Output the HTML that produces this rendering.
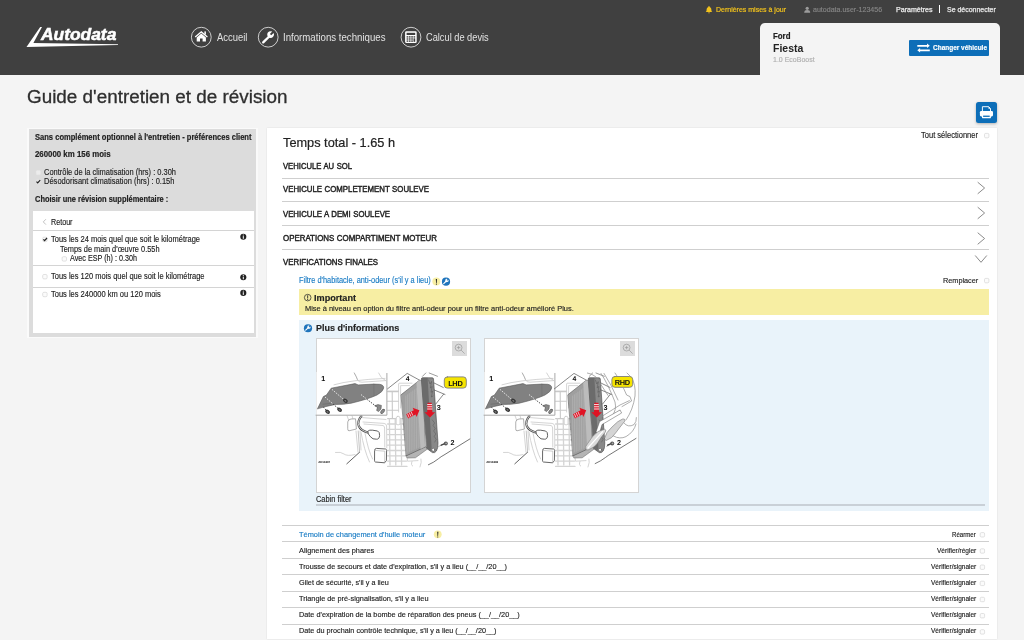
<!DOCTYPE html>
<html lang="fr">
<head>
<meta charset="utf-8">
<title>Guide d'entretien et de révision</title>
<style>
html,body{margin:0;padding:0;}
body{width:1024px;height:640px;overflow:hidden;background:#f4f4f4;font-family:"Liberation Sans",sans-serif;position:relative;}
.t{position:absolute;white-space:nowrap;line-height:1;}
.b{position:absolute;}
.hl{position:absolute;height:1px;background:#cfcfcf;}
svg{position:absolute;left:0;top:0;}
</style>
</head>
<body>
<!-- header -->
<div class="b" style="left:0;top:0;width:1024px;height:74.5px;background:#404040;"></div>
<div class="b" style="left:759.5px;top:23px;width:240.5px;height:53px;background:#f4f4f4;border-radius:5px 5px 0 0;"></div>
<div class="b" style="left:909.4px;top:40px;width:79.8px;height:16px;background:#0d6eb8;border-radius:1px;"></div>
<div class="b" style="left:939.4px;top:5.3px;width:1px;height:8px;background:#fff;"></div>
<!-- print button -->
<div class="b" style="left:976.4px;top:102px;width:20.8px;height:20.8px;background:#0d6eb8;border-radius:2.5px;box-shadow:0 1px 3px rgba(0,0,0,.28);"></div>

<!-- left panel -->
<div class="b" style="left:27px;top:127.5px;width:231.3px;height:210.5px;background:#fafafa;"></div>
<div class="b" style="left:28.7px;top:129px;width:227.8px;height:207.5px;background:#dcdcdc;"></div>
<div class="b" style="left:33px;top:210.5px;width:220.5px;height:122.5px;background:#fff;"></div>
<div class="hl" style="left:33px;top:230px;width:220.5px;background:#d4d4d4;"></div>
<div class="hl" style="left:33px;top:265px;width:220.5px;background:#d4d4d4;"></div>
<div class="hl" style="left:33px;top:287px;width:220.5px;background:#d4d4d4;"></div>

<!-- main panel -->
<div class="b" style="left:267px;top:127.5px;width:730px;height:511.3px;background:#fff;box-shadow:0 0 1.5px rgba(0,0,0,.13);"></div>
<div class="hl" style="left:282.4px;top:177.6px;width:706.9px;"></div>
<div class="hl" style="left:282.4px;top:201.2px;width:706.9px;"></div>
<div class="hl" style="left:282.4px;top:225.1px;width:706.9px;"></div>
<div class="hl" style="left:282.4px;top:248.6px;width:706.9px;"></div>
<div class="b" style="left:298.75px;top:289.25px;width:690.5px;height:25.75px;background:#f7eea3;"></div>
<div class="b" style="left:298.75px;top:319.5px;width:690.5px;height:191.5px;background:#e9f3fa;"></div>
<div class="b" style="left:315.5px;top:337.5px;width:153px;height:153px;background:#fff;border:1px solid #d4d4d4;box-sizing:content-box;"></div>
<div class="b" style="left:483.5px;top:337.5px;width:153px;height:153px;background:#fff;border:1px solid #d4d4d4;box-sizing:content-box;"></div>
<div class="b" style="left:452px;top:341px;width:15px;height:15px;background:#dcdcdc;"></div>
<div class="b" style="left:620px;top:341px;width:15px;height:15px;background:#dcdcdc;"></div>
<div class="hl" style="left:316px;top:504.4px;width:668.5px;height:1.2px;background:#c9d0d7;"></div>
<div class="hl" style="left:282.4px;top:524.9px;width:706.9px;"></div>
<div class="hl" style="left:282.4px;top:541.2px;width:706.9px;"></div>
<div class="hl" style="left:282.4px;top:557.9px;width:706.9px;"></div>
<div class="hl" style="left:282.4px;top:574.2px;width:706.9px;"></div>
<div class="hl" style="left:282.4px;top:590.9px;width:706.9px;"></div>
<div class="hl" style="left:282.4px;top:607px;width:706.9px;"></div>
<div class="hl" style="left:282.4px;top:623.7px;width:706.9px;"></div>


<div class="b" style="left:0;top:0;width:1024px;height:640px;will-change:transform;">
<svg width="1024" height="640" viewBox="0 0 1024 640">
<!-- logo swoosh -->
<path d="M40.2 27 L42 27 L33.4 43.1 L118 44.2 L118 45 L26.5 47 Z" fill="#fff"/>
<!-- nav circles -->
<g fill="none" stroke="#dcdcdc" stroke-width="0.9">
<circle cx="201.3" cy="37.2" r="9.9"/>
<circle cx="268.2" cy="37.2" r="9.9"/>
<circle cx="411" cy="37.2" r="9.9"/>
</g>
<!-- home -->
<g fill="#fff">
<path d="M201.3 31 L207.8 36.6 L207 37.5 L201.3 32.7 L195.6 37.5 L194.8 36.6 Z"/>
<path d="M201.3 33.6 L205.9 37.5 L205.9 41.6 L202.6 41.6 L202.6 38.6 L200 38.6 L200 41.6 L196.7 41.6 L196.7 37.5 Z"/>
<rect x="204.4" y="31.4" width="1.5" height="3.2"/>
</g>
<!-- wrench -->
<g>
<path d="M263.2 42.4 L269.4 36.2" stroke="#fff" stroke-width="2.3" stroke-linecap="round" fill="none"/>
<path d="M273.6 33.0 L271.3 35.3 L269.9 33.9 L272.2 31.6 A3.4 3.4 0 1 0 273.6 33.0 Z" fill="#fff"/>
</g>
<!-- calculator -->
<g>
<rect x="405.1" y="31.3" width="11.6" height="11.8" rx="1.3" fill="#fff"/>
<rect x="406.6" y="32.8" width="8.6" height="2.2" fill="#404040"/>
<g fill="#404040">
<rect x="406.6" y="36.2" width="1.7" height="1.4"/><rect x="408.9" y="36.2" width="1.7" height="1.4"/><rect x="411.2" y="36.2" width="1.7" height="1.4"/><rect x="413.5" y="36.2" width="1.7" height="1.4"/>
<rect x="406.6" y="38.3" width="1.7" height="1.4"/><rect x="408.9" y="38.3" width="1.7" height="1.4"/><rect x="411.2" y="38.3" width="1.7" height="1.4"/>
<rect x="406.6" y="40.4" width="1.7" height="1.4"/><rect x="408.9" y="40.4" width="1.7" height="1.4"/><rect x="411.2" y="40.4" width="1.7" height="1.4"/><rect x="413.5" y="38.3" width="1.7" height="3.5"/>
</g>
</g>
<!-- bell -->
<path d="M709 6.1 C709.5 6.1 709.6 6.6 709.6 6.9 C711 7.4 711.4 8.7 711.4 9.9 C711.4 11 711.8 11.6 712.4 12.1 L705.6 12.1 C706.2 11.6 706.6 11 706.6 9.9 C706.6 8.7 707 7.4 708.4 6.9 C708.4 6.6 708.5 6.1 709 6.1 Z M708.1 12.4 L709.9 12.4 A0.9 0.9 0 0 1 708.1 12.4 Z" fill="#f2c21c"/>
<!-- user -->
<g fill="#9c9c9c">
<circle cx="807.2" cy="8.3" r="1.6"/>
<path d="M804.2 12.7 C804.2 10.6 805.4 10 807.2 10 C809 10 810.2 10.6 810.2 12.7 Z"/>
</g>
<!-- exchange -->
<g fill="#fff">
<path d="M917.3 44.9 L927 44.9 L927 43.5 L929.8 45.8 L927 48.1 L927 46.7 L917.3 46.7 Z"/>
<path d="M929.8 49.4 L920.1 49.4 L920.1 48 L917.3 50.3 L920.1 52.6 L920.1 51.2 L929.8 51.2 Z"/>
</g>
<!-- printer -->
<g>
<path d="M982.4 111.6 V106.7 H988.7 L990.5 108.5 V111.6" fill="none" stroke="#fff" stroke-width="0.95"/>
<path d="M988.5 106.5 L990.7 108.7 L988.5 108.7 Z" fill="#fff"/>
<rect x="979.9" y="111" width="13.1" height="5.4" rx="1.3" fill="#fff"/>
<rect x="982" y="114.4" width="8.9" height="3.8" rx="0.4" fill="#fff"/>
<rect x="983.1" y="115.6" width="6.6" height="1.3" fill="#0d6eb8"/>
</g>
<g fill="#fbfbfb" stroke="#cfcfcf" stroke-width="0.6">
<rect x="984.5" y="133.4" width="4.4" height="4.4" rx="1.2"/>
<rect x="984.5" y="278.4" width="4.4" height="4.4" rx="1.2"/>
<rect x="980.2" y="532.6" width="4.4" height="4.4" rx="1.2"/>
<rect x="980.2" y="548.8" width="4.4" height="4.4" rx="1.2"/>
<rect x="980.2" y="565.0" width="4.4" height="4.4" rx="1.2"/>
<rect x="980.2" y="581.2" width="4.4" height="4.4" rx="1.2"/>
<rect x="980.2" y="597.3" width="4.4" height="4.4" rx="1.2"/>
<rect x="980.2" y="613.5" width="4.4" height="4.4" rx="1.2"/>
<rect x="980.2" y="629.7" width="4.4" height="4.4" rx="1.2"/>
<rect x="42.7" y="237.2" width="4.4" height="4.4" rx="1.2"/>
<rect x="62.1" y="256.7" width="4.4" height="4.4" rx="1.2"/>
<rect x="42.7" y="274.5" width="4.4" height="4.4" rx="1.2"/>
<rect x="42.7" y="292.3" width="4.4" height="4.4" rx="1.2"/>
</g>
<rect x="36.2" y="170.5" width="4.2" height="4.2" rx="1.2" fill="#ececec" stroke="#e6e6e6" stroke-width="0.5"/>
<rect x="36.2" y="179.5" width="4.2" height="4.2" rx="1.2" fill="#e2e2e2" stroke="#e0e0e0" stroke-width="0.5"/>
<!-- left panel: back chevron, checkmarks, info icons -->
<path d="M45.9 219.2 L43.3 221.9 L45.9 224.6" fill="none" stroke="#999" stroke-width="0.6"/>
<path d="M36.5 181.6 L37.7 182.9 L40.2 180.2" fill="none" stroke="#222" stroke-width="1.15"/>
<path d="M43.4 239.4 L44.6 240.7 L47 238" fill="none" stroke="#222" stroke-width="1.2"/>
<g fill="#222">
<circle cx="243.3" cy="236.8" r="3.05"/><circle cx="243.3" cy="277.3" r="3.05"/><circle cx="243.3" cy="292.9" r="3.05"/>
</g>
<g fill="#fff">
<rect x="242.8" y="236.1" width="1" height="2.7"/><rect x="242.8" y="234.6" width="1" height="0.9"/>
<rect x="242.8" y="276.6" width="1" height="2.7"/><rect x="242.8" y="275.1" width="1" height="0.9"/>
<rect x="242.8" y="292.2" width="1" height="2.7"/><rect x="242.8" y="290.7" width="1" height="0.9"/>
</g>
<!-- section chevrons -->
<g fill="none" stroke="#858585" stroke-width="0.95">
<path d="M977.7 182.2 L984.6 188 L977.7 193.8"/>
<path d="M977.7 207.2 L984.6 213 L977.7 218.8"/>
<path d="M977.7 232.7 L984.6 238.5 L977.7 244.3"/>
<path d="M975.2 255.5 L981 262.3 L986.8 255.5"/>
</g>
<!-- yellow ! and blue wrench badges -->
<circle cx="436.35" cy="281.6" r="4" fill="#f7eea3"/>
<path d="M435.8 279 L437 279 L436.7 283.3 L436.1 283.3 Z M435.9 283.8 h0.9 v0.9 h-0.9 Z" fill="#222"/>
<circle cx="446" cy="281.7" r="4.1" fill="#1f74bc"/>
<path d="M443.7 283.6 L446.3 281" stroke="#fff" stroke-width="1.1" stroke-linecap="round" fill="none"/>
<path d="M448.3 279.8 L447.3 280.8 L446.6 280.1 L447.6 279.1 A1.6 1.6 0 1 0 448.3 279.8 Z" fill="#fff"/>
<circle cx="437.75" cy="534.3" r="3.9" fill="#f7eea3"/>
<path d="M437.2 531.8 L438.4 531.8 L438.1 536 L437.5 536 Z M437.3 536.5 h0.9 v0.9 h-0.9 Z" fill="#222"/>
<!-- important (i) icon -->
<circle cx="307.7" cy="297.6" r="3.3" fill="none" stroke="#2a2a2a" stroke-width="0.75"/>
<path d="M307.25 295.3 h0.9 v3.1 h-0.9 Z M307.25 299.1 h0.9 v0.9 h-0.9 Z" fill="#2a2a2a"/>
<!-- plus d'informations badge -->
<circle cx="308" cy="328.25" r="4.1" fill="#1f74bc"/>
<path d="M305.7 330.2 L308.3 327.6" stroke="#fff" stroke-width="1.1" stroke-linecap="round" fill="none"/>
<path d="M310.3 326.4 L309.3 327.4 L308.6 326.7 L309.6 325.7 A1.6 1.6 0 1 0 310.3 326.4 Z" fill="#fff"/>
<!-- zoom icons -->
<g fill="none" stroke="#9a9a9a" stroke-width="0.7">
<circle cx="458.6" cy="347.6" r="3.4"/><path d="M461.1 350.1 L464.6 353.6 M456.9 347.6 h3.4 M458.6 345.9 v3.4"/>
<circle cx="626.6" cy="347.6" r="3.4"/><path d="M629.1 350.1 L632.6 353.6 M624.9 347.6 h3.4 M626.6 345.9 v3.4"/>
</g>
<g transform="translate(0,0)" stroke-linecap="round" stroke-linejoin="round">
<g fill="none" stroke="#c9c9c9" stroke-width="0.8">
<path d="M392.2 391.6 L392.4 418.6 M387.6 391.6 L398.4 391.6 M387.6 401.2 L398.4 401.2 M387.6 410.3 L398.4 410.3 M387.6 418.6 L403 418.6" stroke-width="1.1"/>
<g stroke-width="1.3" stroke="#d4d4d4">
<path d="M389.4 419 L390.0 465"/>
<path d="M395.2 419 L395.8 465"/>
<path d="M401.0 419 L401.6 465"/>
<path d="M387.6 424.0 L403.4 424.0"/>
<path d="M387.6 429.3 L403.8 429.3"/>
<path d="M387.6 434.6 L404.3 434.6"/>
<path d="M387.6 439.9 L404.8 439.9"/>
<path d="M387.6 445.2 L405.2 445.2"/>
<path d="M387.6 450.5 L405.6 450.5"/>
<path d="M387.6 455.8 L406.1 455.8"/>
<path d="M387.6 461.1 L406.5 461.1"/>
<path d="M387.6 466.4 L407.0 466.4"/>
</g>
<path d="M398.6 412 L398.6 384 Q398.6 383.2 399.6 383.2 L412 383.2"/>
<path d="M400.6 408 L400.6 385.6 L409.5 385.6"/>
<path d="M388 391 L398.6 391"/>
<path d="M347 415.6 L349 421 M352 415.6 L353 419 M356 431 L358 452 M360 431 L361 450"/>
<path d="M361 417.5 L386 419.5 M363 422 L384 423.4 Q386.6 423.8 386.6 426 L386.8 448"/>
<path d="M364 424 L383 425.5 Q384.6 426 384.6 428 L384.8 447"/>
<path d="M361 432 Q364 450 369.5 462 M365 433 Q368 450 372.6 459"/>
<path d="M335.5 452.4 Q341 451.6 344 454 Q347 456.4 355 454.6"/>
<path d="M412 461.5 Q410.5 465 412.6 466 M421 459 Q422 462 420 467"/>
<path d="M407 457.5 L407.5 461.2 L418 460.6"/>
</g>
<path d="M347.8 421.5 Q348 419.5 351 419 L355.5 418.8 L356.4 429 L349 430.8 Q347.6 430.8 347.7 429 Z" fill="#fff" stroke="#8c8c8c" stroke-width="0.7"/>
<rect x="396.2" y="416.4" width="3.8" height="8.4" rx="1.6" fill="#fff" stroke="#c9c9c9" stroke-width="0.8"/>
<path d="M374.6 450.2 Q374.6 448.4 376.6 448.4 L385.6 449 Q386.6 449.2 386.6 450.6 L386.4 460.6 L384.6 462.8 L375.4 462 Q374.4 461.8 374.5 460.6 Z" fill="#fff" stroke="#555" stroke-width="0.9"/>
<path d="M384.6 462.8 L384.8 451.2 L374.8 450.4" fill="none" stroke="#9a9a9a" stroke-width="0.5"/>
<path d="M361.4 416 Q357 421.4 358.8 426 Q360.6 430.4 367.6 432.4" fill="none" stroke="#4a4a4a" stroke-width="2.1"/>
<path d="M361.4 416 Q357 421.4 358.8 426 Q360.6 430.4 367.6 432.4" fill="none" stroke="#fff" stroke-width="0.7"/>
<path d="M368 431 Q369.4 429.6 372.6 430.2 L377.6 431 Q379.8 432 379.6 435.4 Q379.4 439.4 376.4 439.2 L373 438.8 Q370.2 437 368.6 434.4 Z" fill="#fff" stroke="#444" stroke-width="0.85"/>
<path d="M346.8 463.8 L359.6 452.2" fill="none" stroke="#3a3a3a" stroke-width="0.8"/>
<path d="M359.6 452.2 L358.2 431" fill="none" stroke="#9a9a9a" stroke-width="0.6"/>
<path d="M428.4 464.8 Q434 462.4 438.6 458.6 Q441 456.6 444 455 L469.8 439" fill="none" stroke="#3a3a3a" stroke-width="0.7"/>
<rect x="316.5" y="372" width="70.4" height="43.2" fill="#fff"/>
<g fill="none" stroke="#c9c9c9" stroke-width="0.8">
<path d="M354.3 373 Q356.6 377 357.6 380 Q358.6 382.4 362 382.2 L385.6 380.6"/>
<path d="M334 384.8 Q350 380 385 378.4"/>
<path d="M378.6 373 Q380.6 378.4 385.4 380.4"/>
</g>
<path d="M354.3 373 Q356.6 377 357.4 379.4" fill="none" stroke="#9a9a9a" stroke-width="0.6"/>
<path d="M386.9 373.4 L386.9 415.2 L316 415.2" fill="none" stroke="#a8a8a8" stroke-width="1"/>
<path d="M317.6 408.6 L323.4 396.5 L326.5 395 L331.2 388.2 L355 383.6 L358.2 384.9 L373.8 384.1 L379.6 384.3 Q383.9 385 383.7 388 Q383.2 391.6 377 395 Q368 399.2 351.2 403.2 Q343 404.6 335.5 404.4 L323.8 407 Z" fill="#818181" stroke="#555" stroke-width="0.6"/>
<path d="M373.8 384 L374 395.8" fill="none" stroke="#6c6c6c" stroke-width="0.5"/>
<path d="M323 404.2 L331 403.4" fill="none" stroke="#6c6c6c" stroke-width="0.7"/>
<g fill="none" stroke-width="0.95" stroke-dasharray="1.5 1.2" stroke-linecap="butt">
<path d="M332 389.4 L343.6 399.4" stroke="#e8e8e8"/>
<path d="M325 397 L333 404" stroke="#e8e8e8"/>
<path d="M361 394.6 L366.6 399" stroke="#e8e8e8"/>
<path d="M333 404 L338.6 408.8" stroke="#444"/>
<path d="M366.6 399 L376.4 406.6" stroke="#444"/>
<path d="M323.4 407 L326.4 410.6" stroke="#444"/>
</g>
<ellipse cx="345.4" cy="400.8" rx="2.6" ry="1.9" transform="rotate(35 345.4 400.8)" fill="#333"/>
<ellipse cx="345.4" cy="400.8" rx="1.2" ry="0.8" transform="rotate(35 345.4 400.8)" fill="#777"/>
<ellipse cx="339.6" cy="409.8" rx="2.6" ry="1.9" transform="rotate(35 339.6 409.8)" fill="#333"/>
<ellipse cx="339.6" cy="409.8" rx="1.2" ry="0.8" transform="rotate(35 339.6 409.8)" fill="#777"/>
<ellipse cx="327.6" cy="411.8" rx="2.6" ry="1.9" transform="rotate(35 327.6 411.8)" fill="#333"/>
<ellipse cx="327.6" cy="411.8" rx="1.2" ry="0.8" transform="rotate(35 327.6 411.8)" fill="#777"/>
<path d="M375 405.6 L378 404.6 L381.4 405.4 L381 409 L378.6 411.6 L376.6 410.4 L377.4 407.6 Z" fill="#8a8a8a" stroke="#444" stroke-width="0.5"/>
<ellipse cx="382.6" cy="411.4" rx="2.6" ry="1.5" transform="rotate(-50 382.6 411.4)" fill="#8a8a8a" stroke="#444" stroke-width="0.5"/>
<g transform="translate(0,0)">
<path d="M387.6 388.8 L407.2 373.4 L420 380.4" fill="none" stroke="#3a3a3a" stroke-width="0.6"/>
<path d="M406.3 455.4 L424.8 446.6 L428 448.6 L415.4 457.8 L407.4 458 Z" fill="#b4b4b4" stroke="#5a5a5a" stroke-width="0.5"/>
<path d="M401.3 394.6 L419.2 380.4 L422.2 380.4 L425.2 447 L406.4 455.8 Z" fill="#9f9f9f" stroke="#555" stroke-width="0.6"/>
<path d="M416.4 382.8 L419.2 380.6 L422 380.6 L425 446.8 L420.6 448.9 Z" fill="#bcbcbc"/>
<g stroke="#bdbdbd" stroke-width="0.5" fill="none">
<path d="M405.8 396.0 L406.0 452.8"/>
<path d="M407.6 394.8 L407.8 452.1"/>
<path d="M409.3 393.5 L409.5 451.3"/>
<path d="M411.1 392.2 L411.2 450.6"/>
<path d="M412.8 391.0 L413.0 449.8"/>
<path d="M414.6 389.8 L414.8 449.1"/>
<path d="M416.3 388.5 L416.5 448.3"/>
<path d="M418.1 387.2 L418.2 447.6"/>
<path d="M419.8 386.0 L420.0 446.8"/>
<path d="M421.6 384.8 L421.8 446.1"/>
<path d="M423.3 383.5 L423.5 445.3"/>
<path d="M425.1 382.2 L425.2 444.6"/>
</g>
<path d="M421.4 379 Q421.4 377.8 422.6 377.8 L432.2 377.8 Q433.4 377.8 433.5 379 L438 443 Q438.2 448 436.4 451 Q434.8 453.4 432.4 452.6 L427 448.6 Z" fill="#888" stroke="#444" stroke-width="0.6"/>
<path d="M421.4 379 Q421.4 377.8 422.6 377.8 L427.6 377.8 L431.6 447.6 L430.6 451.4 L427 448.6 Z" fill="#6b6b6b"/>
<path d="M428.6 380 L430 384 L431.6 381.4 L430.4 388 L432.2 386.4 L431 392.4 L432.6 391 L431.4 397 L433 396" fill="none" stroke="#555" stroke-width="0.5"/>
<path d="M432.4 420 L434.6 423 L433 425.4 L435.2 428.4 L433.6 431 L435.8 434 L434.2 436.4 L436.2 439.4 L434.8 442" fill="none" stroke="#5a5a5a" stroke-width="0.5"/>
<circle cx="433.3" cy="449.8" r="1.5" fill="#fff" stroke="#444" stroke-width="0.5"/>
<path d="M422.5 376.3 L425.8 373 M429.2 373 L437.5 376.3" fill="none" stroke="#3a3a3a" stroke-width="0.5"/>
<path d="M434.1 383 L443.3 387.5 M434.3 390 L445 394.5 M443.6 394.2 L435.8 404" fill="none" stroke="#3a3a3a" stroke-width="0.6"/>
<path d="M406.2 414.2 L413.8 410.2 L412.6 407.8 L419.4 410.2 L416.6 417 L415.6 414.6 L408.2 418.6 Z" fill="#df1324"/>
<path d="M407.6 413.8 L409.2 417.6 M409.4 412.8 L411 416.6 M411.2 411.8 L412.8 415.6" stroke="#fff" stroke-width="0.7" fill="none" stroke-linecap="butt"/>
<path d="M427.6 402.8 L431.6 402.8 L432.4 412.2 L435.2 412.2 L430 417.6 L424.4 412.2 L427.2 412.2 Z" fill="#df1324"/>
<path d="M427.2 404.6 L432 404.6 M427.2 406.8 L432.2 406.8 M427.2 409 L432.4 409" stroke="#fff" stroke-width="0.9" fill="none" stroke-linecap="butt"/>
</g>
<path d="M438.6 446.4 L441 445.4" fill="none" stroke="#777" stroke-width="0.5" stroke-dasharray="1 0.8"/>
<path d="M441.2 445.2 L444.2 443.8" stroke="#444" stroke-width="1.4" fill="none"/>
<circle cx="445.8" cy="443.4" r="2" fill="#555"/><circle cx="446.1" cy="443.3" r="0.9" fill="#aaa"/>
<rect x="444.3" y="376.9" width="22" height="11.2" rx="3" fill="#f6e500" stroke="#7d7d7d" stroke-width="0.9"/>
<text x="455.3" y="385.8" font-family="Liberation Sans, sans-serif" font-size="7.4" font-weight="700" text-anchor="middle" fill="#111" text-rendering="geometricPrecision" letter-spacing="-0.3">LHD</text>
<text x="321.2" y="381" font-size="7.2" font-family="Liberation Sans, sans-serif" font-weight="700" fill="#111" text-rendering="geometricPrecision">1</text>
<text x="450.6" y="445" font-size="7.2" font-family="Liberation Sans, sans-serif" font-weight="700" fill="#111" text-rendering="geometricPrecision">2</text>
<text x="436.8" y="409.6" font-size="7.2" font-family="Liberation Sans, sans-serif" font-weight="700" fill="#111" text-rendering="geometricPrecision">3</text>
<text x="405.8" y="381.4" font-size="6.8" font-family="Liberation Sans, sans-serif" font-weight="700" fill="#111" text-rendering="geometricPrecision">4</text>
<text x="318.2" y="462.9" font-size="2.9" font-family="Liberation Sans, sans-serif" font-weight="700" fill="#111" text-rendering="geometricPrecision" letter-spacing="-0.05">AD13897</text>
</g><g transform="translate(168,0)" stroke-linecap="round" stroke-linejoin="round">
<g fill="none" stroke="#c9c9c9" stroke-width="0.8">
<path d="M392.2 391.6 L392.4 418.6 M387.6 391.6 L398.4 391.6 M387.6 401.2 L398.4 401.2 M387.6 410.3 L398.4 410.3 M387.6 418.6 L403 418.6" stroke-width="1.1"/>
<g stroke-width="1.3" stroke="#d4d4d4">
<path d="M389.4 419 L390.0 465"/>
<path d="M395.2 419 L395.8 465"/>
<path d="M401.0 419 L401.6 465"/>
<path d="M387.6 424.0 L403.4 424.0"/>
<path d="M387.6 429.3 L403.8 429.3"/>
<path d="M387.6 434.6 L404.3 434.6"/>
<path d="M387.6 439.9 L404.8 439.9"/>
<path d="M387.6 445.2 L405.2 445.2"/>
<path d="M387.6 450.5 L405.6 450.5"/>
<path d="M387.6 455.8 L406.1 455.8"/>
<path d="M387.6 461.1 L406.5 461.1"/>
<path d="M387.6 466.4 L407.0 466.4"/>
</g>
<path d="M398.6 412 L398.6 384 Q398.6 383.2 399.6 383.2 L412 383.2"/>
<path d="M400.6 408 L400.6 385.6 L409.5 385.6"/>
<path d="M388 391 L398.6 391"/>
<path d="M347 415.6 L349 421 M352 415.6 L353 419 M356 431 L358 452 M360 431 L361 450"/>
<path d="M361 417.5 L386 419.5 M363 422 L384 423.4 Q386.6 423.8 386.6 426 L386.8 448"/>
<path d="M364 424 L383 425.5 Q384.6 426 384.6 428 L384.8 447"/>
<path d="M361 432 Q364 450 369.5 462 M365 433 Q368 450 372.6 459"/>
<path d="M335.5 452.4 Q341 451.6 344 454 Q347 456.4 355 454.6"/>
<path d="M412 461.5 Q410.5 465 412.6 466 M421 459 Q422 462 420 467"/>
<path d="M407 457.5 L407.5 461.2 L418 460.6"/>
</g>
<path d="M347.8 421.5 Q348 419.5 351 419 L355.5 418.8 L356.4 429 L349 430.8 Q347.6 430.8 347.7 429 Z" fill="#fff" stroke="#8c8c8c" stroke-width="0.7"/>
<rect x="396.2" y="416.4" width="3.8" height="8.4" rx="1.6" fill="#fff" stroke="#c9c9c9" stroke-width="0.8"/>
<path d="M374.6 450.2 Q374.6 448.4 376.6 448.4 L385.6 449 Q386.6 449.2 386.6 450.6 L386.4 460.6 L384.6 462.8 L375.4 462 Q374.4 461.8 374.5 460.6 Z" fill="#fff" stroke="#555" stroke-width="0.9"/>
<path d="M384.6 462.8 L384.8 451.2 L374.8 450.4" fill="none" stroke="#9a9a9a" stroke-width="0.5"/>
<path d="M361.4 416 Q357 421.4 358.8 426 Q360.6 430.4 367.6 432.4" fill="none" stroke="#4a4a4a" stroke-width="2.1"/>
<path d="M361.4 416 Q357 421.4 358.8 426 Q360.6 430.4 367.6 432.4" fill="none" stroke="#fff" stroke-width="0.7"/>
<path d="M368 431 Q369.4 429.6 372.6 430.2 L377.6 431 Q379.8 432 379.6 435.4 Q379.4 439.4 376.4 439.2 L373 438.8 Q370.2 437 368.6 434.4 Z" fill="#fff" stroke="#444" stroke-width="0.85"/>
<path d="M346.8 463.8 L359.6 452.2" fill="none" stroke="#3a3a3a" stroke-width="0.8"/>
<path d="M359.6 452.2 L358.2 431" fill="none" stroke="#9a9a9a" stroke-width="0.6"/>
<path d="M427.2 463.6 Q433 461 437.6 457.4 Q440 455.4 443 453.8 L468 438.4" fill="none" stroke="#3a3a3a" stroke-width="0.7"/>
<rect x="316.5" y="372" width="70.4" height="43.2" fill="#fff"/>
<g fill="none" stroke="#c9c9c9" stroke-width="0.8">
<path d="M354.3 373 Q356.6 377 357.6 380 Q358.6 382.4 362 382.2 L385.6 380.6"/>
<path d="M334 384.8 Q350 380 385 378.4"/>
<path d="M378.6 373 Q380.6 378.4 385.4 380.4"/>
</g>
<path d="M354.3 373 Q356.6 377 357.4 379.4" fill="none" stroke="#9a9a9a" stroke-width="0.6"/>
<path d="M386.9 373.4 L386.9 415.2 L316 415.2" fill="none" stroke="#a8a8a8" stroke-width="1"/>
<path d="M317.6 408.6 L323.4 396.5 L326.5 395 L331.2 388.2 L355 383.6 L358.2 384.9 L373.8 384.1 L379.6 384.3 Q383.9 385 383.7 388 Q383.2 391.6 377 395 Q368 399.2 351.2 403.2 Q343 404.6 335.5 404.4 L323.8 407 Z" fill="#818181" stroke="#555" stroke-width="0.6"/>
<path d="M373.8 384 L374 395.8" fill="none" stroke="#6c6c6c" stroke-width="0.5"/>
<path d="M323 404.2 L331 403.4" fill="none" stroke="#6c6c6c" stroke-width="0.7"/>
<g fill="none" stroke-width="0.95" stroke-dasharray="1.5 1.2" stroke-linecap="butt">
<path d="M332 389.4 L343.6 399.4" stroke="#e8e8e8"/>
<path d="M325 397 L333 404" stroke="#e8e8e8"/>
<path d="M361 394.6 L366.6 399" stroke="#e8e8e8"/>
<path d="M333 404 L338.6 408.8" stroke="#444"/>
<path d="M366.6 399 L376.4 406.6" stroke="#444"/>
<path d="M323.4 407 L326.4 410.6" stroke="#444"/>
</g>
<ellipse cx="345.4" cy="400.8" rx="2.6" ry="1.9" transform="rotate(35 345.4 400.8)" fill="#333"/>
<ellipse cx="345.4" cy="400.8" rx="1.2" ry="0.8" transform="rotate(35 345.4 400.8)" fill="#777"/>
<ellipse cx="339.6" cy="409.8" rx="2.6" ry="1.9" transform="rotate(35 339.6 409.8)" fill="#333"/>
<ellipse cx="339.6" cy="409.8" rx="1.2" ry="0.8" transform="rotate(35 339.6 409.8)" fill="#777"/>
<ellipse cx="327.6" cy="411.8" rx="2.6" ry="1.9" transform="rotate(35 327.6 411.8)" fill="#333"/>
<ellipse cx="327.6" cy="411.8" rx="1.2" ry="0.8" transform="rotate(35 327.6 411.8)" fill="#777"/>
<path d="M375 405.6 L378 404.6 L381.4 405.4 L381 409 L378.6 411.6 L376.6 410.4 L377.4 407.6 Z" fill="#8a8a8a" stroke="#444" stroke-width="0.5"/>
<ellipse cx="382.6" cy="411.4" rx="2.6" ry="1.5" transform="rotate(-50 382.6 411.4)" fill="#8a8a8a" stroke="#444" stroke-width="0.5"/>
<g transform="translate(-1.2,0)">
<path d="M387.6 388.8 L407.2 373.4 L420 380.4" fill="none" stroke="#3a3a3a" stroke-width="0.6"/>
<path d="M406.3 455.4 L424.8 446.6 L428 448.6 L415.4 457.8 L407.4 458 Z" fill="#b4b4b4" stroke="#5a5a5a" stroke-width="0.5"/>
<path d="M401.3 394.6 L419.2 380.4 L422.2 380.4 L425.2 447 L406.4 455.8 Z" fill="#9f9f9f" stroke="#555" stroke-width="0.6"/>
<path d="M416.4 382.8 L419.2 380.6 L422 380.6 L425 446.8 L420.6 448.9 Z" fill="#bcbcbc"/>
<g stroke="#bdbdbd" stroke-width="0.5" fill="none">
<path d="M405.8 396.0 L406.0 452.8"/>
<path d="M407.6 394.8 L407.8 452.1"/>
<path d="M409.3 393.5 L409.5 451.3"/>
<path d="M411.1 392.2 L411.2 450.6"/>
<path d="M412.8 391.0 L413.0 449.8"/>
<path d="M414.6 389.8 L414.8 449.1"/>
<path d="M416.3 388.5 L416.5 448.3"/>
<path d="M418.1 387.2 L418.2 447.6"/>
<path d="M419.8 386.0 L420.0 446.8"/>
<path d="M421.6 384.8 L421.8 446.1"/>
<path d="M423.3 383.5 L423.5 445.3"/>
<path d="M425.1 382.2 L425.2 444.6"/>
</g>
<path d="M421.4 379 Q421.4 377.8 422.6 377.8 L432.2 377.8 Q433.4 377.8 433.5 379 L438 443 Q438.2 448 436.4 451 Q434.8 453.4 432.4 452.6 L427 448.6 Z" fill="#888" stroke="#444" stroke-width="0.6"/>
<path d="M421.4 379 Q421.4 377.8 422.6 377.8 L427.6 377.8 L431.6 447.6 L430.6 451.4 L427 448.6 Z" fill="#6b6b6b"/>
<path d="M428.6 380 L430 384 L431.6 381.4 L430.4 388 L432.2 386.4 L431 392.4 L432.6 391 L431.4 397 L433 396" fill="none" stroke="#555" stroke-width="0.5"/>
<path d="M432.4 420 L434.6 423 L433 425.4 L435.2 428.4 L433.6 431 L435.8 434 L434.2 436.4 L436.2 439.4 L434.8 442" fill="none" stroke="#5a5a5a" stroke-width="0.5"/>
<circle cx="433.3" cy="449.8" r="1.5" fill="#fff" stroke="#444" stroke-width="0.5"/>
<path d="M422.5 376.3 L425.8 373 M429.2 373 L437.5 376.3" fill="none" stroke="#3a3a3a" stroke-width="0.5"/>
<path d="M434.1 383 L443.3 387.5 M434.3 390 L445 394.5 M443.6 394.2 L435.8 404" fill="none" stroke="#3a3a3a" stroke-width="0.6"/>
<path d="M406.2 414.2 L413.8 410.2 L412.6 407.8 L419.4 410.2 L416.6 417 L415.6 414.6 L408.2 418.6 Z" fill="#df1324"/>
<path d="M407.6 413.8 L409.2 417.6 M409.4 412.8 L411 416.6 M411.2 411.8 L412.8 415.6" stroke="#fff" stroke-width="0.7" fill="none" stroke-linecap="butt"/>
<path d="M427.6 402.8 L431.6 402.8 L432.4 412.2 L435.2 412.2 L430 417.6 L424.4 412.2 L427.2 412.2 Z" fill="#df1324"/>
<path d="M427.2 404.6 L432 404.6 M427.2 406.8 L432.2 406.8 M427.2 409 L432.4 409" stroke="#fff" stroke-width="0.9" fill="none" stroke-linecap="butt"/>
</g>
<path d="M438.6 446.4 L441 445.4" fill="none" stroke="#777" stroke-width="0.5" stroke-dasharray="1 0.8"/>
<path d="M439.59999999999997 445.2 L442.59999999999997 443.8" stroke="#444" stroke-width="1.4" fill="none"/>
<circle cx="444.2" cy="443.4" r="2" fill="#555"/><circle cx="444.5" cy="443.3" r="0.9" fill="#aaa"/>
<g fill="none" stroke="#8c8c8c" stroke-width="0.7">
<path d="M419.4 373 Q424 373.6 428 377 L440 395.4"/>
<path d="M433 373.4 Q440 384 447 402 Q449 410 444 416"/>
<path d="M436 373.4 Q443 384 450 400"/>
<path d="M447 373 L449 376 M459 373 L463 377 Q468 384 467 396 Q465 410 458 420"/>
<path d="M455.6 388.4 L458.6 395 L462 396.6 L463.6 401 L454 406.6"/>
<path d="M432 417.6 L452 405 L461.4 400.6"/>
<path d="M436 420.6 L452 410.4 M456 423 Q460 428 466 424.6 Q468.6 422 468.4 417.6"/>
<path d="M445.4 436 Q452 439.6 458 436.6 Q466 432 468 424"/>
</g>
<path d="M428 432 L431.6 421.6 L452 410 L453.6 413 L434 424.6 L431.4 433.6 Z" fill="#fff" stroke="#555" stroke-width="0.5"/>
<path d="M417.8 449.4 Q416.6 446.6 419.6 443.6 Q424 436 430 431.6 L436.6 429.2 Q438.6 429.6 437.4 432 Q433 437 429.6 443 Q426.6 447.6 420.4 449.8 Q418.6 450.4 417.8 449.4 Z" fill="#dcdcdc" stroke="#666" stroke-width="0.5"/>
<path d="M436.4 438.6 Q438 432 444 427 Q450 420.6 454.6 419 Q457.8 418.6 456.6 421.4 Q452 427 447.6 433 Q444 438.6 438.4 440.4 Q436.6 440.6 436.4 438.6 Z" fill="#d4d4d4" stroke="#666" stroke-width="0.5"/>
<path d="M420 448 Q426 441 434.6 431.6" fill="none" stroke="#fff" stroke-width="1.2"/>
<rect x="443.9" y="376.5" width="20.8" height="10.8" rx="3" fill="#f6e500" stroke="#7d7d7d" stroke-width="0.9"/>
<text x="454.3" y="385.2" font-family="Liberation Sans, sans-serif" font-size="7.4" font-weight="700" text-anchor="middle" fill="#111" text-rendering="geometricPrecision" letter-spacing="-0.35">RHD</text>
<text x="321.2" y="381" font-size="7.2" font-family="Liberation Sans, sans-serif" font-weight="700" fill="#111" text-rendering="geometricPrecision">1</text>
<text x="449.0" y="445" font-size="7.2" font-family="Liberation Sans, sans-serif" font-weight="700" fill="#111" text-rendering="geometricPrecision">2</text>
<text x="435.6" y="409.6" font-size="7.2" font-family="Liberation Sans, sans-serif" font-weight="700" fill="#111" text-rendering="geometricPrecision">3</text>
<text x="404.6" y="381.4" font-size="6.8" font-family="Liberation Sans, sans-serif" font-weight="700" fill="#111" text-rendering="geometricPrecision">4</text>
<text x="318.2" y="462.9" font-size="2.9" font-family="Liberation Sans, sans-serif" font-weight="700" fill="#111" text-rendering="geometricPrecision" letter-spacing="-0.05">AD13898</text>
</g>
</svg>

<span class="t" style="left:40.60px;top:25.51px;font-size:17px;font-weight:700;color:#fff;transform:scaleX(1.0221);transform-origin:0 0;font-style:italic;-webkit-text-stroke:0.55px #fff;">Autodata</span>
<span class="t" style="left:216.70px;top:31.96px;font-size:10.5px;color:#e2e2e2;transform:scaleX(0.8978);transform-origin:0 0;">Accueil</span>
<span class="t" style="left:283.10px;top:31.96px;font-size:10.5px;color:#e2e2e2;transform:scaleX(0.9194);transform-origin:0 0;">Informations techniques</span>
<span class="t" style="left:425.60px;top:31.96px;font-size:10.5px;color:#e2e2e2;transform:scaleX(0.8806);transform-origin:0 0;">Calcul de devis</span>
<span class="t" style="left:715.80px;top:6.10px;font-size:7.33px;color:#f2c21c;transform:scaleX(0.9548);transform-origin:0 0;-webkit-text-stroke:0.2px #f2c21c;">Dernières mises à jour</span>
<span class="t" style="left:813.40px;top:6.55px;font-size:6.67px;color:#858585;transform:scaleX(1.0608);transform-origin:0 0;-webkit-text-stroke:0.14px #858585;">autodata.user-123456</span>
<span class="t" style="left:895.60px;top:7.45px;font-size:6.67px;color:#e8e8e8;transform:scaleX(1.0638);transform-origin:0 0;-webkit-text-stroke:0.25px #e8e8e8;">Paramètres</span>
<span class="t" style="left:947.20px;top:7.45px;font-size:6.67px;color:#e8e8e8;transform:scaleX(1.0463);transform-origin:0 0;-webkit-text-stroke:0.25px #e8e8e8;">Se déconnecter</span>
<span class="t" style="left:772.80px;top:31.97px;font-size:8.3px;font-weight:700;color:#222;transform:scaleX(0.9492);transform-origin:0 0;-webkit-text-stroke:0.18px #222;">Ford</span>
<span class="t" style="left:772.80px;top:42.89px;font-size:11px;font-weight:700;color:#222;transform:scaleX(0.9529);transform-origin:0 0;">Fiesta</span>
<span class="t" style="left:772.80px;top:57.25px;font-size:6.67px;color:#b0b0b0;transform:scaleX(1.0507);transform-origin:0 0;-webkit-text-stroke:0.14px #b0b0b0;">1.0 EcoBoost</span>
<span class="t" style="left:933.00px;top:43.80px;font-size:7.33px;font-weight:700;color:#fff;transform:scaleX(0.8839);transform-origin:0 0;-webkit-text-stroke:0.18px #fff;">Changer véhicule</span>
<span class="t" style="left:26.80px;top:88.45px;font-size:18.67px;color:#2e2e2e;transform:scaleX(1.0110);transform-origin:0 0;-webkit-text-stroke:0.3px #2e2e2e;">Guide d'entretien et de révision</span>
<span class="t" style="left:35.00px;top:134.06px;font-size:8.2px;font-weight:700;color:#222;transform:scaleX(0.9234);transform-origin:0 0;-webkit-text-stroke:0.18px #222;">Sans complément optionnel à l'entretien - préférences client</span>
<span class="t" style="left:35.00px;top:150.76px;font-size:8.2px;font-weight:700;color:#222;transform:scaleX(0.9587);transform-origin:0 0;-webkit-text-stroke:0.18px #222;">260000 km 156 mois</span>
<span class="t" style="left:43.75px;top:169.06px;font-size:8.2px;color:#222;transform:scaleX(0.9121);transform-origin:0 0;-webkit-text-stroke:0.14px #222;">Contrôle de la climatisation (hrs) : 0.30h</span>
<span class="t" style="left:43.75px;top:178.06px;font-size:8.2px;color:#222;transform:scaleX(0.9191);transform-origin:0 0;-webkit-text-stroke:0.14px #222;">Désodorisant climatisation (hrs) : 0.15h</span>
<span class="t" style="left:35.00px;top:195.66px;font-size:8.2px;font-weight:700;color:#222;transform:scaleX(0.9096);transform-origin:0 0;-webkit-text-stroke:0.18px #222;">Choisir une révision supplémentaire :</span>
<span class="t" style="left:50.50px;top:218.66px;font-size:8.2px;color:#222;transform:scaleX(0.8748);transform-origin:0 0;-webkit-text-stroke:0.14px #222;">Retour</span>
<span class="t" style="left:50.50px;top:236.26px;font-size:8.2px;color:#222;transform:scaleX(0.9145);transform-origin:0 0;-webkit-text-stroke:0.14px #222;">Tous les 24 mois quel que soit le kilométrage</span>
<span class="t" style="left:60.00px;top:246.06px;font-size:8.2px;color:#222;transform:scaleX(0.9019);transform-origin:0 0;-webkit-text-stroke:0.14px #222;">Temps de main d'œuvre 0.55h</span>
<span class="t" style="left:69.50px;top:255.26px;font-size:8.2px;color:#222;transform:scaleX(0.8796);transform-origin:0 0;-webkit-text-stroke:0.14px #222;">Avec ESP (h) : 0.30h</span>
<span class="t" style="left:50.50px;top:273.46px;font-size:8.2px;color:#222;transform:scaleX(0.9165);transform-origin:0 0;-webkit-text-stroke:0.14px #222;">Tous les 120 mois quel que soit le kilométrage</span>
<span class="t" style="left:50.50px;top:291.16px;font-size:8.2px;color:#222;transform:scaleX(0.9169);transform-origin:0 0;-webkit-text-stroke:0.14px #222;">Tous les 240000 km ou 120 mois</span>
<span class="t" style="left:283.00px;top:136.00px;font-size:13px;color:#222;transform:scaleX(0.9810);transform-origin:0 0;-webkit-text-stroke:0.2px #222;">Temps total - 1.65 h</span>
<span class="t" style="left:921.25px;top:131.56px;font-size:8.2px;color:#222;transform:scaleX(0.9207);transform-origin:0 0;-webkit-text-stroke:0.14px #222;">Tout sélectionner</span>
<span class="t" style="left:283.00px;top:161.97px;font-size:8.3px;color:#222;transform:scaleX(0.9252);transform-origin:0 0;-webkit-text-stroke:0.42px #222;word-spacing:0.4px;">VEHICULE AU SOL</span>
<span class="t" style="left:283.00px;top:185.37px;font-size:8.3px;color:#222;transform:scaleX(0.9413);transform-origin:0 0;-webkit-text-stroke:0.42px #222;word-spacing:0.4px;">VEHICULE COMPLETEMENT SOULEVE</span>
<span class="t" style="left:283.00px;top:209.57px;font-size:8.3px;color:#222;transform:scaleX(0.9372);transform-origin:0 0;-webkit-text-stroke:0.42px #222;word-spacing:0.4px;">VEHICULE A DEMI SOULEVE</span>
<span class="t" style="left:283.00px;top:233.67px;font-size:8.3px;color:#222;transform:scaleX(0.9534);transform-origin:0 0;-webkit-text-stroke:0.42px #222;word-spacing:0.4px;">OPERATIONS COMPARTIMENT MOTEUR</span>
<span class="t" style="left:283.00px;top:257.67px;font-size:8.3px;color:#222;transform:scaleX(0.9472);transform-origin:0 0;-webkit-text-stroke:0.42px #222;word-spacing:0.4px;">VERIFICATIONS FINALES</span>
<span class="t" style="left:298.75px;top:277.06px;font-size:8.2px;color:#1a7cc4;transform:scaleX(0.9022);transform-origin:0 0;-webkit-text-stroke:0.14px #1a7cc4;">Filtre d'habitacle, anti-odeur (s'il y a lieu)</span>
<span class="t" style="left:943.00px;top:277.37px;font-size:7.6px;color:#222;transform:scaleX(0.9600);transform-origin:0 0;-webkit-text-stroke:0.14px #222;">Remplacer</span>
<span class="t" style="left:314.25px;top:294.10px;font-size:9.33px;font-weight:700;color:#222;transform:scaleX(0.9764);transform-origin:0 0;-webkit-text-stroke:0.18px #222;">Important</span>
<span class="t" style="left:304.75px;top:305.40px;font-size:7.5px;color:#222;transform:scaleX(0.9917);transform-origin:0 0;-webkit-text-stroke:0.14px #222;">Mise à niveau en option du filtre anti-odeur pour un filtre anti-odeur amélioré Plus.</span>
<span class="t" style="left:315.50px;top:324.35px;font-size:9.33px;font-weight:700;color:#222;transform:scaleX(0.9602);transform-origin:0 0;-webkit-text-stroke:0.18px #222;">Plus d'informations</span>
<span class="t" style="left:316.00px;top:496.06px;font-size:8.2px;color:#222;transform:scaleX(0.9070);transform-origin:0 0;-webkit-text-stroke:0.14px #222;">Cabin filter</span>
<span class="t" style="left:298.75px;top:530.55px;font-size:7.33px;color:#1a7cc4;transform:scaleX(1.0113);transform-origin:0 0;-webkit-text-stroke:0.14px #1a7cc4;">Témoin de changement d'huile moteur</span>
<span class="t" style="left:298.75px;top:546.80px;font-size:7.33px;color:#222;transform:scaleX(1.0038);transform-origin:0 0;-webkit-text-stroke:0.14px #222;">Alignement des phares</span>
<span class="t" style="left:298.75px;top:562.80px;font-size:7.33px;color:#222;transform:scaleX(0.9949);transform-origin:0 0;-webkit-text-stroke:0.14px #222;">Trousse de secours et date d'expiration, s'il y a lieu (__/__/20__)</span>
<span class="t" style="left:298.75px;top:578.80px;font-size:7.33px;color:#222;transform:scaleX(0.9905);transform-origin:0 0;-webkit-text-stroke:0.14px #222;">Gilet de sécurité, s'il y a lieu</span>
<span class="t" style="left:298.75px;top:594.55px;font-size:7.33px;color:#222;transform:scaleX(1.0005);transform-origin:0 0;-webkit-text-stroke:0.14px #222;">Triangle de pré-signalisation, s'il y a lieu</span>
<span class="t" style="left:298.75px;top:610.80px;font-size:7.33px;color:#222;transform:scaleX(0.9952);transform-origin:0 0;-webkit-text-stroke:0.14px #222;">Date d'expiration de la bombe de réparation des pneus (__/__/20__)</span>
<span class="t" style="left:298.75px;top:626.80px;font-size:7.33px;color:#222;transform:scaleX(0.9925);transform-origin:0 0;-webkit-text-stroke:0.14px #222;">Date du prochain contrôle technique, s'il y a lieu (__/__/20__)</span>
<span class="t" style="left:952.25px;top:532.10px;font-size:6.67px;color:#222;transform:scaleX(0.9173);transform-origin:0 0;-webkit-text-stroke:0.14px #222;">Réarmer</span>
<span class="t" style="left:936.75px;top:548.35px;font-size:6.67px;color:#222;transform:scaleX(0.9824);transform-origin:0 0;-webkit-text-stroke:0.14px #222;">Vérifier/régler</span>
<span class="t" style="left:930.75px;top:564.35px;font-size:6.67px;color:#222;transform:scaleX(0.9784);transform-origin:0 0;-webkit-text-stroke:0.14px #222;">Vérifier/signaler</span>
<span class="t" style="left:930.75px;top:580.35px;font-size:6.67px;color:#222;transform:scaleX(0.9784);transform-origin:0 0;-webkit-text-stroke:0.14px #222;">Vérifier/signaler</span>
<span class="t" style="left:930.75px;top:596.10px;font-size:6.67px;color:#222;transform:scaleX(0.9784);transform-origin:0 0;-webkit-text-stroke:0.14px #222;">Vérifier/signaler</span>
<span class="t" style="left:930.75px;top:612.35px;font-size:6.67px;color:#222;transform:scaleX(0.9784);transform-origin:0 0;-webkit-text-stroke:0.14px #222;">Vérifier/signaler</span>
<span class="t" style="left:930.75px;top:628.35px;font-size:6.67px;color:#222;transform:scaleX(0.9784);transform-origin:0 0;-webkit-text-stroke:0.14px #222;">Vérifier/signaler</span>
</div>
</body>
</html>
